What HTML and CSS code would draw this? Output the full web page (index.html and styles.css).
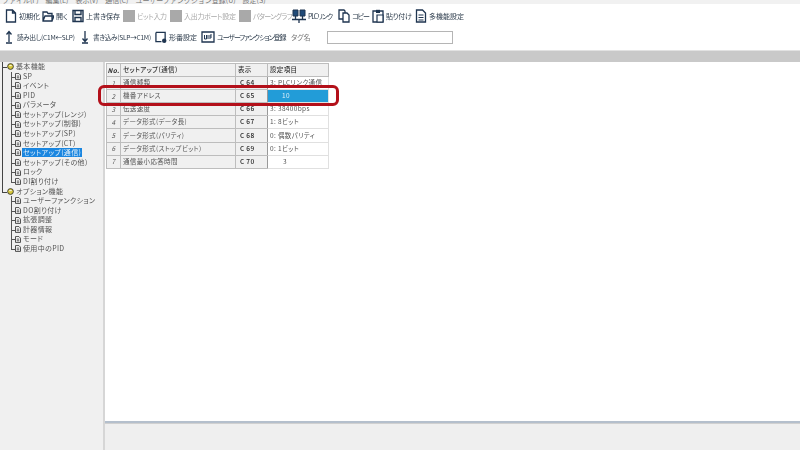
FILE: index.html
```html
<!DOCTYPE html>
<html lang="ja">
<head>
<meta charset="utf-8">
<title>セットアップ(通信)</title>
<link rel="stylesheet" href="styles.css">
</head>
<body>
<svg class="defs" width="0" height="0">
  <symbol id="doc" viewBox="0 0 12 14"><path d="M1.5 1h6l3 3v9h-9z M7.500 1v3h3" fill="#fff" stroke="#1f3550" stroke-width="1.300"/></symbol>
  <symbol id="tdoc" viewBox="0 0 7 8"><path d="M.6.6h4l1.800 1.800v5h-5.800z" fill="#fff" stroke="#333" stroke-width="1"/><path d="M2 3.500h3M2 5.500h3" stroke="#333" stroke-width="1"/></symbol>
  <symbol id="tfolder" viewBox="0 0 8 8"><circle cx="4" cy="4" r="3.300" fill="#d8c93a" stroke="#333" stroke-width="1"/><path d="M2.500 3h3" stroke="#fff"/></symbol>
</svg>
<div class="menu">ファイル(F)　編集(E)　表示(V)　通信(C)　ユーザーファンクション登録(U)　設定(S)</div>
<header class="toolbar filtered">
  <div class="tool-row">
    <div class="tool w-37"><svg class="ico" viewBox="0 0 12 14"><use href="#doc"/></svg><span>初期化</span></div>
    <div class="tool w-30"><svg class="ico" viewBox="0 0 12 14"><path d="M1 3h4l1 1.500h4V12H1z M1 12l2-5h9l-2 5" fill="#fff" stroke="#1f3550" stroke-width="1.300"/></svg><span>開く</span></div>
    <div class="tool w-51"><svg class="ico" viewBox="0 0 12 14"><path d="M1 1.500h10v11H1z M3 1.500v4h6v-4 M3 12.500v-4h6v4" fill="#fff" stroke="#1f3550" stroke-width="1.400"/></svg><span>上書き保存</span></div>
    <div class="tool w-47 off"><i class="gray"></i><span class="tight-s">ビット入力</span></div>
    <div class="tool w-69 off"><i class="gray"></i><span class="tight-s">入出力ポート設定</span></div>
    <div class="tool w-53 off"><i class="gray"></i><span class="tight-m">パターングラフ</span></div>
    <div class="tool w-46"><svg class="ico wide" viewBox="0 0 14 14"><path d="M1 1h5v6H1z M8 1h5v6H8z" fill="#1f4a78" stroke="#1f3550"/><path d="M3.500 7v3M10.500 7v3M0 10.500h14M7 10.500V14" stroke="#1f3550" stroke-width="1.300"/></svg><span class="tight-l">PLCリンク</span></div>
    <div class="tool w-34"><svg class="ico" viewBox="0 0 12 14"><path d="M1 1h5l1 1v8H1z" fill="#fff" stroke="#1f3550" stroke-width="1.300"/><path d="M5 4h4l2 2v7H5z" fill="#fff" stroke="#1f3550" stroke-width="1.300"/></svg><span class="tight-l">コピー</span></div>
    <div class="tool w-43"><svg class="ico" viewBox="0 0 12 14"><path d="M1 2h10v11H1z" fill="#fff" stroke="#1f3550" stroke-width="1.300"/><path d="M4 .8h4V4H4z" fill="#1f3550"/><path d="M5 6h6v7H5z" fill="#fff" stroke="#1f3550" stroke-width="1.200"/></svg><span class="tight-s">貼り付け</span></div>
    <div class="tool"><svg class="ico" viewBox="0 0 12 14"><path d="M1.500 1h6l3 3v9h-9z" fill="#fff" stroke="#1f3550" stroke-width="1.300"/><path d="M3.500 6h5M3.500 8.500h5M3.500 11h5" stroke="#1f3550"/></svg><span>多機能設定</span></div>
  </div>
  <div class="tool-row">
    <div class="tool w-76"><svg class="ico slim" viewBox="0 0 8 14"><path d="M4 2v10M1.500 4.500L4 1.500l2.500 3M1 13h6" fill="none" stroke="#1f3550" stroke-width="1.300"/></svg><span class="cond">読み出し(C1M←SLP)</span></div>
    <div class="tool w-74"><svg class="ico slim" viewBox="0 0 8 14"><path d="M4 1v10M1.500 8.500L4 11.500l2.500-3M1 13h6" fill="none" stroke="#1f3550" stroke-width="1.300"/></svg><span class="cond">書き込み(SLP→C1M)</span></div>
    <div class="tool w-46"><svg class="ico" viewBox="0 0 13 14"><path d="M1 2h10v8" fill="none" stroke="#1f3550" stroke-width="1.400"/><path d="M1 2v10h6" fill="none" stroke="#1f3550" stroke-width="1.400"/><circle cx="10" cy="11" r="2.400" fill="#1f3550"/></svg><span>形番設定</span></div>
    <div class="tool w-90"><svg class="ico wide" viewBox="0 0 14 14"><path d="M1 2h12v10H1z" fill="#fff" stroke="#1f3550" stroke-width="1.300"/><path d="M3.500 5v4h2V5M7 9V5M9 9V5h2M9 7h2" fill="none" stroke="#1f3550"/></svg><span class="tight-l">ユーザーファンクション登録</span></div>
    <span class="tag-label">タグ名</span>
    <input class="tag-input" type="text">
  </div>
</header>
<div class="band"></div>
<main class="workspace">
  <nav class="tree filtered">
    <div class="group">
      <div class="node root"><svg class="nico" viewBox="0 0 8 8"><use href="#tfolder"/></svg>基本機能</div>
      <div class="node"><svg class="dico" viewBox="0 0 7 8"><use href="#tdoc"/></svg>SP</div>
      <div class="node"><svg class="dico" viewBox="0 0 7 8"><use href="#tdoc"/></svg>イベント</div>
      <div class="node"><svg class="dico" viewBox="0 0 7 8"><use href="#tdoc"/></svg>PID</div>
      <div class="node"><svg class="dico" viewBox="0 0 7 8"><use href="#tdoc"/></svg>パラメータ</div>
      <div class="node"><svg class="dico" viewBox="0 0 7 8"><use href="#tdoc"/></svg>セットアップ(レンジ)</div>
      <div class="node"><svg class="dico" viewBox="0 0 7 8"><use href="#tdoc"/></svg>セットアップ(制御)</div>
      <div class="node"><svg class="dico" viewBox="0 0 7 8"><use href="#tdoc"/></svg>セットアップ(SP)</div>
      <div class="node"><svg class="dico" viewBox="0 0 7 8"><use href="#tdoc"/></svg>セットアップ(CT)</div>
      <div class="node"><svg class="dico" viewBox="0 0 7 8"><use href="#tdoc"/></svg><span class="sel">セットアップ(通信)</span></div>
      <div class="node"><svg class="dico" viewBox="0 0 7 8"><use href="#tdoc"/></svg>セットアップ(その他)</div>
      <div class="node"><svg class="dico" viewBox="0 0 7 8"><use href="#tdoc"/></svg>ロック</div>
      <div class="node last"><svg class="dico" viewBox="0 0 7 8"><use href="#tdoc"/></svg>DI割り付け</div>
    </div>
    <div class="group second">
      <div class="node root"><svg class="nico" viewBox="0 0 8 8"><use href="#tfolder"/></svg>オプション機能</div>
      <div class="node"><svg class="dico" viewBox="0 0 7 8"><use href="#tdoc"/></svg>ユーザーファンクション</div>
      <div class="node"><svg class="dico" viewBox="0 0 7 8"><use href="#tdoc"/></svg>DO割り付け</div>
      <div class="node"><svg class="dico" viewBox="0 0 7 8"><use href="#tdoc"/></svg>拡張調整</div>
      <div class="node"><svg class="dico" viewBox="0 0 7 8"><use href="#tdoc"/></svg>計器情報</div>
      <div class="node"><svg class="dico" viewBox="0 0 7 8"><use href="#tdoc"/></svg>モード</div>
      <div class="node last"><svg class="dico" viewBox="0 0 7 8"><use href="#tdoc"/></svg>使用中のPID</div>
    </div>
  </nav>
  <section class="right">
    <div class="sheet">
      <table class="grid filtered">
        <colgroup><col class="c-no"><col class="c-name"><col class="c-disp"><col class="c-val"></colgroup>
        <thead><tr><th class="no">No.</th><th>セットアップ(通信)</th><th>表示</th><th>設定項目</th></tr></thead>
        <tbody>
          <tr><td class="no">1</td><td>通信種類</td><td class="seg">C 64</td><td class="val">3: PLCリンク通信</td></tr>
          <tr><td class="no">2</td><td>機番アドレス</td><td class="seg">C 65</td><td class="val active">10</td></tr>
          <tr><td class="no">3</td><td>伝送速度</td><td class="seg">C 66</td><td class="val">3: 38400bps</td></tr>
          <tr><td class="no">4</td><td>データ形式(データ長)</td><td class="seg">C 67</td><td class="val">1: 8ビット</td></tr>
          <tr><td class="no">5</td><td>データ形式(パリティ)</td><td class="seg">C 68</td><td class="val">0: 偶数パリティ</td></tr>
          <tr><td class="no">6</td><td>データ形式(ストップビット)</td><td class="seg">C 69</td><td class="val">0: 1ビット</td></tr>
          <tr><td class="no">7</td><td>通信最小応答時間</td><td class="seg">C 70</td><td class="val num">3</td></tr>
        </tbody>
      </table>
      <div class="callout"></div>
    </div>
    <div class="status"></div>
  </section>
</main>
</body>
</html>
```

FILE: styles.css
```css
* { box-sizing: border-box; }
html, body { margin: 0; height: 450px; overflow: hidden; }
body {
  width: 800px;
  font-family: "Noto Sans CJK JP", "Noto Sans", sans-serif;
  background: #fff;
  color: #333;
  display: flex;
  flex-direction: column;
}
.defs { position: absolute; }
.filtered { filter: blur(0.4px); }

.menu {
  height: 4px;
  flex: none;
  overflow: hidden;
  background: #f1f1f1;
  font-size: 7px;
  line-height: 1px;
  color: #777;
  padding-left: 2px;
  white-space: nowrap;
}

.toolbar {
  height: 46px;
  flex: none;
  padding: 2px 0 0 5px;
  display: flex;
  flex-direction: column;
  gap: 1px;
  background: #fff;
}
.tool-row { display: flex; align-items: center; height: 20px; white-space: nowrap; }
.tool {
  display: flex;
  align-items: center;
  gap: 2px;
  font-size: 7px;
  color: #2b3a4a;
  flex: none;
  font-feature-settings: "palt";
}
.tool.off { color: #a8a8a8; }
.cond { font-size: 6.500px; letter-spacing: -.2px; }
.tight-s { letter-spacing: -.3px; }
.tight-m { letter-spacing: -.7px; }
.tight-l { letter-spacing: -1.100px; }
.ico { width: 12px; height: 14px; flex: none; }
.ico.wide { width: 14px; }
.ico.slim { width: 8px; margin-right: 2px; }
.gray { display: block; width: 12px; height: 12px; background: #a9a9a9; flex: none; }
.w-30 { width: 30px; }
.w-34 { width: 34px; }
.w-37 { width: 37px; }
.w-43 { width: 43px; }
.w-46 { width: 46px; }
.w-47 { width: 47px; }
.w-51 { width: 51px; }
.w-53 { width: 53px; }
.w-69 { width: 69px; }
.w-74 { width: 74px; }
.w-76 { width: 76px; }
.w-90 { width: 90px; }
.tag-label { font-size: 7px; color: #777; width: 36px; flex: none; font-feature-settings: "palt"; }
.tag-input {
  width: 126px;
  height: 13px;
  border: 1px solid #b5b5b5;
  background: #fff;
  padding: 0;
  flex: none;
}

.band { height: 12px; background: #c9c9c9; flex: none; border-top: 1px solid #e2e2e2; }

.workspace { flex: 1; display: flex; min-height: 0; }
.tree {
  width: 103px;
  flex: none;
  background: #f0f0f0;
  font-size: 7px;
  color: #555;
  font-feature-settings: "palt";
}
.group { position: relative; }
.group::before {
  content: "";
  position: absolute;
  left: 2px;
  top: 0;
  bottom: 0;
  border-left: 1px solid #444;
}
.group.second::before { bottom: auto; height: 5px; }
.node {
  position: relative;
  height: 9.580px;
  line-height: 9.580px;
  padding-left: 15px;
  display: flex;
  align-items: center;
  gap: 2px;
  letter-spacing: .35px;
  white-space: nowrap;
}
.node.root { padding-left: 7px; }
.node::before {
  content: "";
  position: absolute;
  left: 11px;
  top: 0;
  bottom: 0;
  border-left: 1px solid #555;
}
.node::after {
  content: "";
  position: absolute;
  left: 11px;
  width: 4px;
  top: 5px;
  border-top: 1px solid #555;
}
.node.root::before { display: none; }
.node.root::after { left: 2px; width: 5px; border-top-color: #444; }
.node.last::before { bottom: 4px; }
.nico { width: 7px; height: 7px; flex: none; }
.dico { width: 6px; height: 7px; flex: none; }
.sel { background: #1a86e0; color: #dfeefa; padding: 0 1px; line-height: 9px; margin-left: -1px; }

.right { flex: 1; display: flex; flex-direction: column; min-width: 0; border-left: 2px solid #d6d6d6; }
.sheet {
  height: 361px;
  flex: none;
  background: #fff;
  padding: 1px 0 0 1px;
  position: relative;
  border-bottom: 2px solid #b4bfcc;
}
.grid {
  border-collapse: collapse;
  table-layout: fixed;
  width: 222px;
  font-size: 6.500px;
  color: #555;
  font-feature-settings: "palt";
  letter-spacing: .35px;
}
.c-no { width: 14px; }
.c-name { width: 115px; }
.c-disp { width: 32px; }
.c-val { width: 61px; }
.grid tr { height: 13.100px; }
.grid th, .grid td {
  border: 1px solid #bdbdbd;
  background: #f0f0f0;
  padding: 0 0 1px 2px;
  line-height: 9px;
  white-space: nowrap;
  overflow: hidden;
  font-weight: normal;
  text-align: left;
}
.grid th { color: #333; font-weight: 500; }
.grid .no { font-style: italic; text-align: center; padding: 0; }
.grid th.no { font-weight: bold; }
.grid .seg { color: #222; padding-left: 4px; border-right-color: #999; font-weight: 500; }
.grid .val { background: #fff; border-color: #e0e0e0; }
.grid .val.active { background: #229cd8; color: #dff0fa; padding-left: 14px; }
.grid .val.num { padding-left: 15px; }
.callout {
  position: absolute;
  left: -7px;
  top: 23px;
  width: 241px;
  height: 21px;
  border: 3px solid #b3101a;
  border-radius: 6px;
}
.status { flex: 1; background: #efefef; border-top: 1px solid #d0d0d0; }
```
